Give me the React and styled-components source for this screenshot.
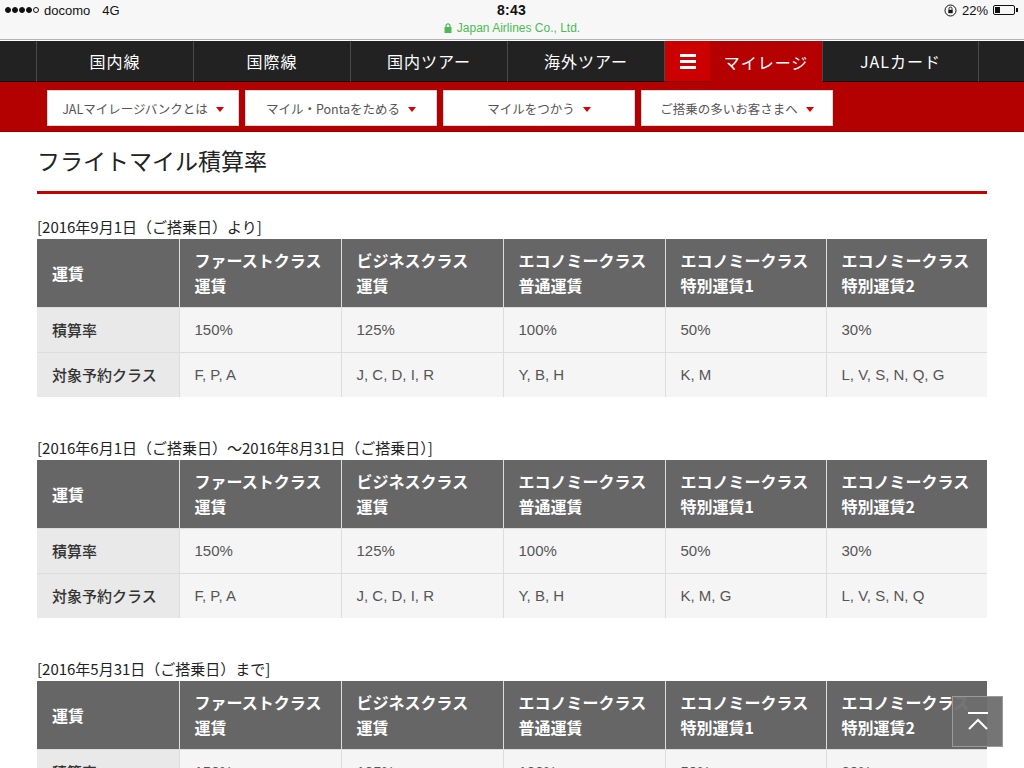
import React from "react";
import styled, { createGlobalStyle } from "styled-components";

const Global = createGlobalStyle`
  html, body { margin: 0; padding: 0; background: #fff; }
  body { font-family: "Liberation Sans", "Noto Sans CJK JP", sans-serif; color: #222; }
  * { box-sizing: border-box; }
`;

const StatusBar = styled.div`
  height: 40px;
  background: #f7f7f7;
  border-bottom: 1px solid #b4b4b4;
  position: relative;
  font-family: "Liberation Sans", "Noto Sans CJK JP", sans-serif;
`;
const StatusRow = styled.div`
  display: flex;
  justify-content: space-between;
  align-items: center;
  height: 20px;
  padding: 0 6px 0 5px;
  font-size: 13px;
  color: #111;
`;
const StatusLeft = styled.div`
  display: flex;
  align-items: center;
  gap: 4px;
  width: 200px;
`;
const Dots = styled.span`
  display: inline-flex;
  gap: 1px;
  margin-right: 1px;
`;
const Dot = styled.span`
  width: 6px;
  height: 6px;
  border-radius: 50%;
  background: ${p => (p.$on ? "#111" : "transparent")};
  border: 1px solid #111;
`;
const Clock = styled.div`
  font-size: 14px;
  font-weight: bold;
  letter-spacing: 0.3px;
`;
const StatusRight = styled.div`
  display: flex;
  align-items: center;
  justify-content: flex-end;
  gap: 5px;
  width: 200px;
`;
const Battery = styled.span`
  display: inline-flex;
  align-items: center;
`;
const BatteryBody = styled.span`
  width: 22px;
  height: 10px;
  border: 1px solid #111;
  border-radius: 2px;
  padding: 1px;
  display: flex;
`;
const BatteryFill = styled.span`
  width: 5px;
  background: #111;
`;
const BatteryTip = styled.span`
  width: 2px;
  height: 4px;
  background: #111;
  margin-left: 1px;
`;
const UrlRow = styled.div`
  display: flex;
  justify-content: center;
  align-items: center;
  gap: 5px;
  font-size: 12px;
  color: #4dbb54;
  height: 16px;
`;

const Nav = styled.nav`
  display: flex;
  height: 42px;
  background: #222;
  border-top: 1px solid #fff;
`;
const NavEdge = styled.div`
  width: ${p => p.$w}px;
  border-right: ${p => (p.$right ? "1px solid #4a4a4a" : "none")};
  border-bottom: 1px solid #111;
`;
const NavItem = styled.div`
  width: 157px;
  display: flex;
  align-items: center;
  justify-content: center;
  color: #fff;
  font-size: 16px;
  letter-spacing: 1px;
  border-right: 1px solid #4a4a4a;
  border-left: ${p => (p.$left ? "1px solid #4a4a4a" : "none")};
  border-bottom: 1px solid #111;
  font-family: "Noto Sans CJK JP", sans-serif;
`;
const NavActive = styled.div`
  width: 157px;
  display: flex;
  background: #b40000;
  color: #fff;
`;
const Burger = styled.div`
  width: 45px;
  background: #cc0000;
  display: flex;
  flex-direction: column;
  justify-content: center;
  align-items: center;
  gap: 3px;
  border-bottom: 1px solid #8a0000;
`;
const BurgerBar = styled.span`
  width: 16px;
  height: 3px;
  background: #fff;
`;
const ActiveLabel = styled.div`
  flex: 1;
  display: flex;
  align-items: center;
  justify-content: center;
  font-size: 16px;
  letter-spacing: 1px;
  font-family: "Noto Sans CJK JP", sans-serif;
`;

const SubBar = styled.div`
  height: 50px;
  background: #b30000;
  border-bottom: 1px solid #8c0000;
  display: flex;
  gap: 6px;
  padding: 8px 0 0 47px;
`;
const SubButton = styled.div`
  width: 192px;
  height: 36px;
  background: #fff;
  border: 1px solid #d8d8d8;
  display: flex;
  align-items: center;
  justify-content: center;
  gap: 8px;
  font-size: 12.5px;
  color: #555;
  font-family: "Noto Sans CJK JP", sans-serif;
`;
const Caret = styled.span`
  width: 0;
  height: 0;
  border-left: 4px solid transparent;
  border-right: 4px solid transparent;
  border-top: 5px solid #d00;
  margin-top: 2px;
`;

const Main = styled.main`
  padding: 0 37px;
  font-family: "Noto Sans CJK JP", sans-serif;
`;
const Title = styled.h1`
  margin: 0;
  padding: 12px 0 15px;
  line-height: 32px;
  font-size: 23px;
  font-weight: 400;
  color: #222;
  border-bottom: 3px solid #c80000;
`;
const Caption = styled.div`
  margin: ${p => (p.$first ? "22px" : "40px")} 0 1px;
  line-height: 22px;
  font-size: 15px;
  color: #222;
  white-space: nowrap;
`;
const Table = styled.table`
  width: 950px;
  border-collapse: collapse;
  table-layout: fixed;
`;
const Th = styled.th`
  background: #666;
  color: #fff;
  font-weight: bold;
  font-size: 16px;
  line-height: 25px;
  text-align: left;
  padding: 7px 15px 6px;
  height: 68px;
  white-space: nowrap;
  overflow: hidden;
  border-left: 1px solid #ddd;
  &:first-child { border-left: none; }
`;
const Td = styled.td`
  background: ${p => (p.$head ? "#e9e9e9" : "#f5f5f5")};
  color: ${p => (p.$head ? "#333" : "#555")};
  font-size: 15px;
  font-weight: ${p => (p.$head ? 500 : 400)};
  height: 45px;
  padding: 0 15px;
  white-space: nowrap;
  border-left: 1px solid #ddd;
  border-top: 1px solid #ddd;
  font-family: ${p => (p.$head ? '"Noto Sans CJK JP", sans-serif' : '"Liberation Sans", "Noto Sans CJK JP", sans-serif')};
  &:first-child { border-left: none; }
`;
const Tr = styled.tr``;

const TopButton = styled.div`
  position: fixed;
  left: 952px;
  top: 696px;
  width: 51px;
  height: 51px;
  background: rgba(110, 110, 110, 0.95);
  border: 1px solid #9a9a9a;
  display: flex;
  align-items: center;
  justify-content: center;
`;

const cols = [
  ["運賃"],
  ["ファーストクラス", "運賃"],
  ["ビジネスクラス", "運賃"],
  ["エコノミークラス", "普通運賃"],
  ["エコノミークラス", "特別運賃1"],
  ["エコノミークラス", "特別運賃2"],
];
const widths = [142, 162, 162, 162, 161, 161];

const sections = [
  {
    caption: "[2016年9月1日（ご搭乗日）より]",
    classes: ["F, P, A", "J, C, D, I, R", "Y, B, H", "K, M", "L, V, S, N, Q, G"],
  },
  {
    caption: "[2016年6月1日（ご搭乗日）～2016年8月31日（ご搭乗日）]",
    classes: ["F, P, A", "J, C, D, I, R", "Y, B, H", "K, M, G", "L, V, S, N, Q"],
  },
  {
    caption: "[2016年5月31日（ご搭乗日）まで]",
    classes: ["F, P, A", "J, C, D, I, R", "Y, B, H", "K, M", "L, V, S, N, Q, G"],
  },
];
const rates = ["150%", "125%", "100%", "50%", "30%"];

function RateTable({ classes }) {
  return (
    <Table>
      <colgroup>
        {widths.map((w, i) => (
          <col key={i} style={{ width: w }} />
        ))}
      </colgroup>
      <thead>
        <Tr>
          {cols.map((c, i) => (
            <Th key={i}>
              {c.map((l, j) => (
                <React.Fragment key={j}>
                  {j > 0 && <br />}
                  {l}
                </React.Fragment>
              ))}
            </Th>
          ))}
        </Tr>
      </thead>
      <tbody>
        <Tr>
          <Td $head>積算率</Td>
          {rates.map(r => (
            <Td key={r}>{r}</Td>
          ))}
        </Tr>
        <Tr>
          <Td $head>対象予約クラス</Td>
          {classes.map(c => (
            <Td key={c}>{c}</Td>
          ))}
        </Tr>
      </tbody>
    </Table>
  );
}

export default function App() {
  return (
    <>
      <Global />
      <StatusBar>
        <StatusRow>
          <StatusLeft>
            <Dots>
              {[1, 1, 1, 1, 0].map((on, i) => (
                <Dot key={i} $on={!!on} />
              ))}
            </Dots>
            <span>docomo</span>
            <span style={{ marginLeft: 8 }}>4G</span>
          </StatusLeft>
          <Clock>8:43</Clock>
          <StatusRight>
            <svg width="13" height="13" viewBox="0 0 13 13">
              <circle cx="6.5" cy="6.5" r="5.5" fill="none" stroke="#111" strokeWidth="1" />
              <rect x="4.3" y="5.8" width="4.4" height="3.4" fill="#111" />
              <path d="M5 5.8 V4.6 a1.5 1.5 0 0 1 3 0 V5.8" fill="none" stroke="#111" strokeWidth="0.9" />
            </svg>
            <span>22%</span>
            <Battery>
              <BatteryBody>
                <BatteryFill />
              </BatteryBody>
              <BatteryTip />
            </Battery>
          </StatusRight>
        </StatusRow>
        <UrlRow>
          <svg width="8" height="10" viewBox="0 0 8 10">
            <rect x="0.5" y="4" width="7" height="6" rx="0.5" fill="#4dbb54" />
            <path d="M2 4 V2.8 a2 2 0 0 1 4 0 V4" fill="none" stroke="#4dbb54" strokeWidth="1.2" />
          </svg>
          <span>Japan Airlines Co., Ltd.</span>
        </UrlRow>
      </StatusBar>
      <Nav>
        <NavEdge $w={37} $right />
        <NavItem>国内線</NavItem>
        <NavItem>国際線</NavItem>
        <NavItem>国内ツアー</NavItem>
        <NavItem>海外ツアー</NavItem>
        <NavActive>
          <Burger>
            <BurgerBar />
            <BurgerBar />
            <BurgerBar />
          </Burger>
          <ActiveLabel>マイレージ</ActiveLabel>
        </NavActive>
        <NavItem $left>JALカード</NavItem>
        <NavEdge $w={45} />
      </Nav>
      <SubBar>
        {["JALマイレージバンクとは", "マイル・Pontaをためる", "マイルをつかう", "ご搭乗の多いお客さまへ"].map(t => (
          <SubButton key={t}>
            <span>{t}</span>
            <Caret />
          </SubButton>
        ))}
      </SubBar>
      <Main>
        <Title>フライトマイル積算率</Title>
        {sections.map((s, i) => (
          <React.Fragment key={i}>
            <Caption $first={i === 0}>{s.caption}</Caption>
            <RateTable classes={s.classes} />
          </React.Fragment>
        ))}
      </Main>
      <TopButton>
        <svg width="26" height="22" viewBox="0 0 26 22">
          <path d="M3 2 H23" stroke="#fff" strokeWidth="2" />
          <path d="M4 18 L13 9 L22 18" stroke="#fff" strokeWidth="2" fill="none" />
        </svg>
      </TopButton>
    </>
  );
}
